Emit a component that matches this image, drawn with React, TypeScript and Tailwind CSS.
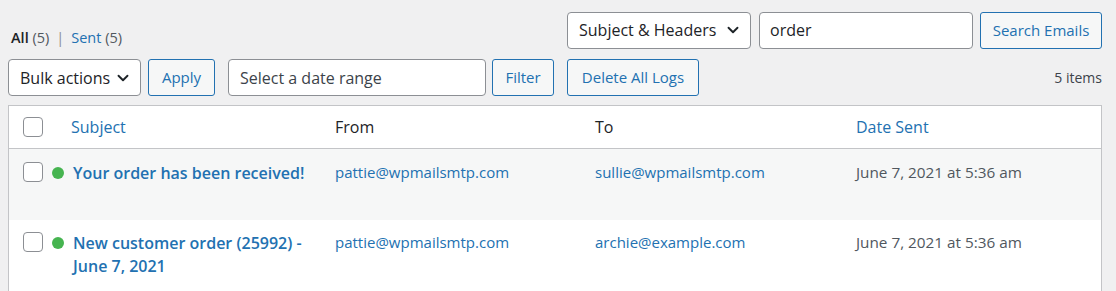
import { ChevronDown } from "lucide-react"

const rows = [
  {
    subject: "Your order has been received!",
    from: "pattie@wpmailsmtp.com",
    to: "sullie@wpmailsmtp.com",
    date: "June 7, 2021 at 5:36 am",
    alt: true,
  },
  {
    subject: "New customer order (25992) - June 7, 2021",
    from: "pattie@wpmailsmtp.com",
    to: "archie@example.com",
    date: "June 7, 2021 at 5:36 am",
    alt: false,
  },
]

function Checkbox() {
  return <span className="block h-[20px] w-[20px] shrink-0 rounded-[4px] border border-[#8c8f94] bg-white" />
}

function Button({ children, className = "" }: { children: React.ReactNode; className?: string }) {
  return (
    <button
      className={`h-[37px] whitespace-nowrap rounded-[3px] border border-[#2271b1] bg-[#f6f7f7] text-[15px] text-[#2271b1] ${className}`}
    >
      {children}
    </button>
  )
}

export default function App() {
  return (
    <div
      className="min-h-[291px] w-[1116px] overflow-hidden bg-[#f0f0f1] pl-[8px] pr-[14px] pt-[11px] text-[#1d2327]"
      style={{ fontFamily: '"Open Sans", "Noto Sans", sans-serif' }}
    >
      {/* top line: views + search */}
      <div className="flex h-[37px] items-start justify-between">
        <div className="pl-[3px] pt-[16px] text-[14.5px]">
          <span className="font-semibold text-[#1d2327]">All</span>{" "}
          <span className="text-[#50575e]">(5)</span>
          <span className="mx-[7px] text-[#8c8f94]">|</span>
          <span className="text-[#2271b1]">Sent</span> <span className="text-[#50575e]">(5)</span>
        </div>
        <div className="flex items-center gap-[8px]">
          <div className="flex h-[37px] w-[184px] items-center justify-between rounded-[4px] border border-[#8c8f94] bg-white pl-[11px] pr-[8px] text-[16px]">
            <span>Subject &amp; Headers</span>
            <ChevronDown size={18} strokeWidth={2.5} className="text-[#1d2327]" />
          </div>
          <div className="flex h-[37px] w-[214px] items-center rounded-[4px] border border-[#8c8f94] bg-white px-[10px] text-[16px]">
            order
          </div>
          <Button className="ml-[-1px] mt-[1px] w-[122px]">Search Emails</Button>
        </div>
      </div>

      {/* second line: actions */}
      <div className="mt-[11px] flex items-center">
        <div className="flex h-[37px] w-[133px] items-center justify-between rounded-[4px] border border-[#8c8f94] bg-white pl-[11px] pr-[8px] text-[16px]">
          <span>Bulk actions</span>
          <ChevronDown size={18} strokeWidth={2.5} className="text-[#1d2327]" />
        </div>
        <Button className="ml-[7px] w-[67px]">Apply</Button>
        <div className="ml-[13px] flex h-[37px] w-[258px] items-center rounded-[4px] border border-[#8c8f94] bg-white px-[11px] text-[16px] text-[#3c434a]">
          Select a date range
        </div>
        <Button className="ml-[6px] w-[62px]">Filter</Button>
        <Button className="ml-[13px] w-[132px]">Delete All Logs</Button>
        <span className="ml-auto text-[14px] text-[#3c434a]">5 items</span>
      </div>

      {/* table */}
      <div className="mt-[9px] border border-[#c3c4c7] bg-white">
        <div className="flex h-[43px] items-center border-b border-[#c3c4c7] text-[16px]">
          <div className="flex w-[62px] pl-[14px]">
            <Checkbox />
          </div>
          <div className="w-[264px] text-[#2271b1]">Subject</div>
          <div className="w-[260px]">From</div>
          <div className="w-[261px]">To</div>
          <div className="text-[#2271b1]">Date Sent</div>
        </div>
        {rows.map((r, i) => (
          <div
            key={r.subject}
            className={`flex h-[71px] items-start ${i === 0 ? "pt-[13px]" : "pt-[12px]"} ${r.alt ? "bg-[#f6f7f7]" : "bg-white"}`}
          >
            <div className="flex w-[43px] pl-[14px]">
              <Checkbox />
            </div>
            <div className="flex w-[283px] items-start">
              <span className="mt-[5px] h-[12px] w-[12px] shrink-0 rounded-full bg-[#46b450]" />
              <span className="ml-[9px] w-[240px] text-[16px] font-semibold leading-[23px] text-[#2271b1]">{r.subject}</span>
            </div>
            <div className="w-[260px] text-[15px] leading-[21px] text-[#2271b1]">{r.from}</div>
            <div className="w-[261px] text-[15px] leading-[21px] text-[#2271b1]">{r.to}</div>
            <div className="text-[15.3px] leading-[21px] text-[#50575e]">{r.date}</div>
          </div>
        ))}
      </div>
    </div>
  )
}
